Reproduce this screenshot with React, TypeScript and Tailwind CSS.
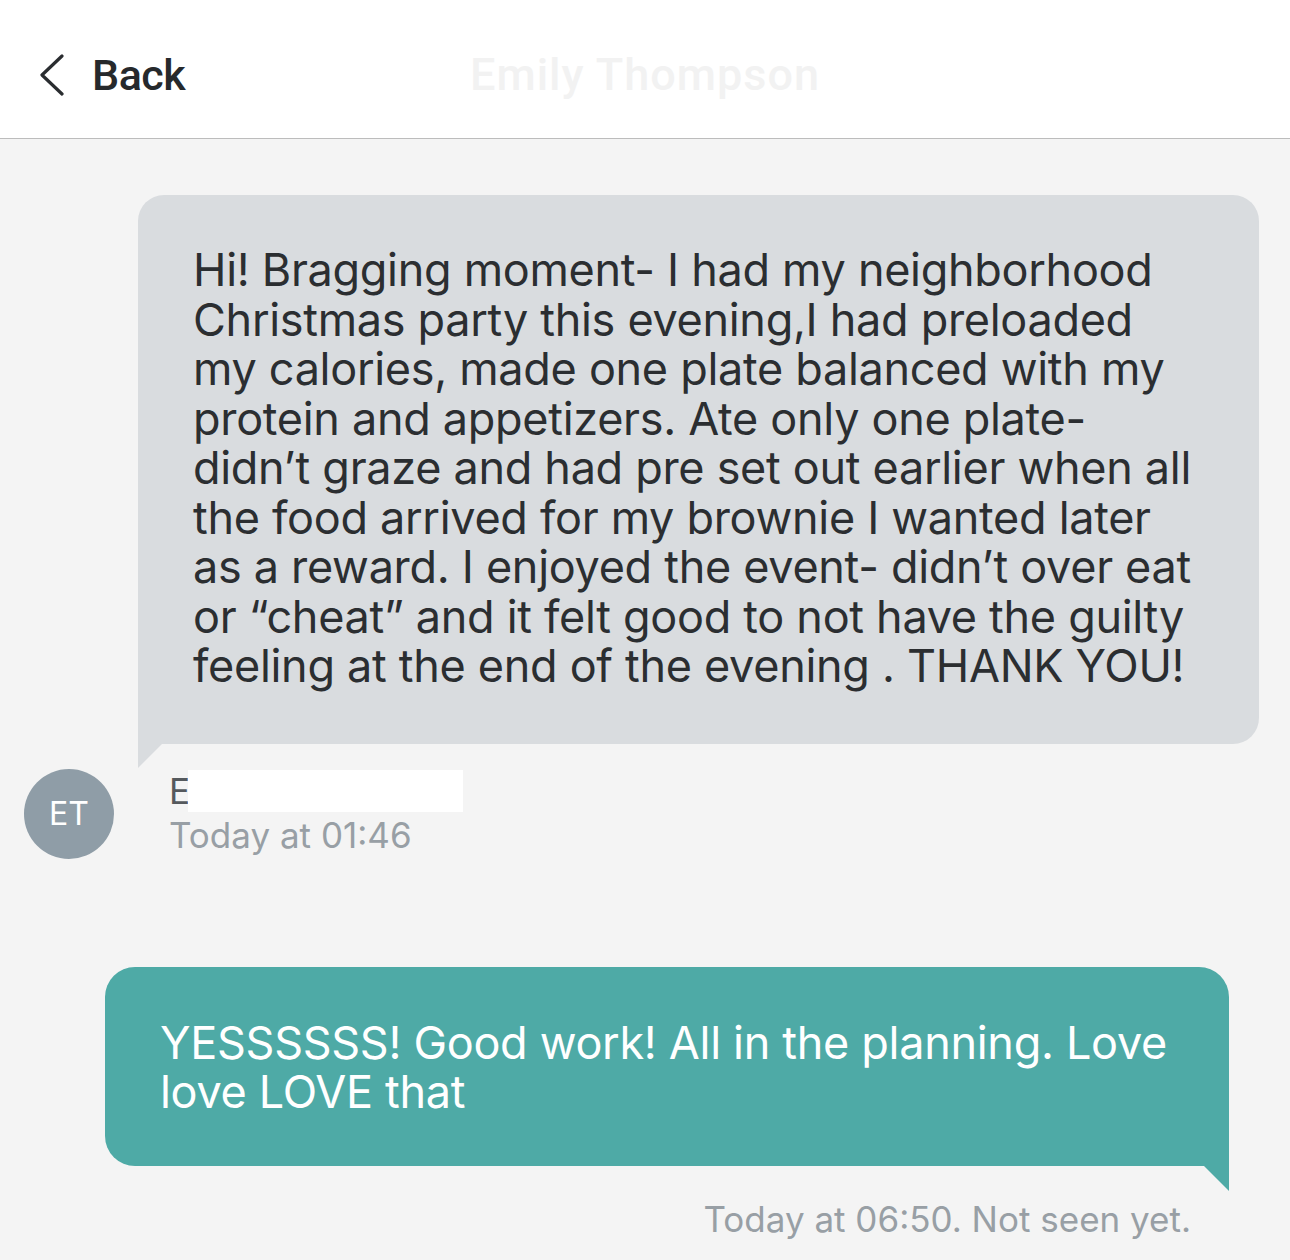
import React from 'react';

const ChevronLeft: React.FC = () => (
  <svg width="30" height="42" viewBox="0 0 30 42" fill="none">
    <path d="M26 2L6 21l20 19" stroke="#2a2d30" strokeWidth="3.2" strokeLinecap="round" strokeLinejoin="round" />
  </svg>
);

const App: React.FC = () => {
  return (
    <div className="w-[1290px] h-[1260px] overflow-hidden bg-[#f4f4f4] font-['Inter',sans-serif]">
      {/* header */}
      <div className="h-[139px] pt-[12px] bg-white border-b border-[#bcbcbc] grid grid-cols-[1fr_auto_1fr] items-center">
        <div className="flex items-center pl-[36px] gap-[26px]">
          <ChevronLeft />
          <span className="font-['Roboto',sans-serif] font-medium text-[43px] text-[#26292c] tracking-[-0.5px]">Back</span>
        </div>
        <div className="font-['Roboto',sans-serif] font-medium text-[45px] text-[#f2f2f2] tracking-[1px]">Emily Thompson</div>
        <div />
      </div>

      {/* incoming message */}
      <div className="pt-[56px]">
        <div className="relative ml-[138px] mr-[31px] bg-[#d9dcdf] rounded-[26px] rounded-bl-none pl-[55px] pr-[62px] pt-[50px] pb-[53px]">
          <p className="text-[45px] leading-[49.5px] text-[#2b2e31] tracking-[-0.3px]">
            Hi! Bragging moment- I had my neighborhood Christmas party this evening,I had preloaded my calories, made one plate balanced with my protein and appetizers. Ate only one plate- didn’t graze and had pre set out earlier when all the food arrived for my brownie I wanted later as a reward. I enjoyed the event- didn’t over eat or “cheat” and it felt good to not have the guilty feeling at the end of the evening . THANK YOU!
          </p>
          <svg className="absolute left-0 top-full" width="24" height="24" viewBox="0 0 24 24">
            <path d="M0 0H24L0 24Z" fill="#d9dcdf" />
          </svg>
        </div>

        <div className="flex items-start mt-[25px] pl-[24px]">
          <div className="w-[90px] h-[90px] rounded-full bg-[#8f9da7] flex items-center justify-center text-white text-[32px]">
            ET
          </div>
          <div className="ml-[55px] text-[35px] leading-[44px]">
            <div className="flex items-center text-[#55595d]">
              <span>E</span>
              <span className="ml-[-2px] inline-block w-[275px] h-[42px] bg-white" />
            </div>
            <div className="text-[#989fa5]">Today at 01:46</div>
          </div>
        </div>

        {/* outgoing message */}
        <div className="relative mt-[108px] ml-[105px] mr-[61px] bg-[#4eaaa6] rounded-[30px] rounded-br-none pl-[55px] pr-[30px] pt-[51px] pb-[49px]">
          <p className="text-[45px] leading-[49.5px] text-white tracking-[-0.3px]">
            YESSSSSS! Good work! All in the planning. Love love LOVE that
          </p>
          <svg className="absolute right-0 top-full" width="25" height="25" viewBox="0 0 25 25">
            <path d="M0 0H25V25Z" fill="#4eaaa6" />
          </svg>
        </div>

        <div className="mt-[27px] pr-[99px] text-right text-[35px] text-[#989fa5]">
          Today at 06:50. Not seen yet.
        </div>
      </div>
    </div>
  );
};

export default App;
